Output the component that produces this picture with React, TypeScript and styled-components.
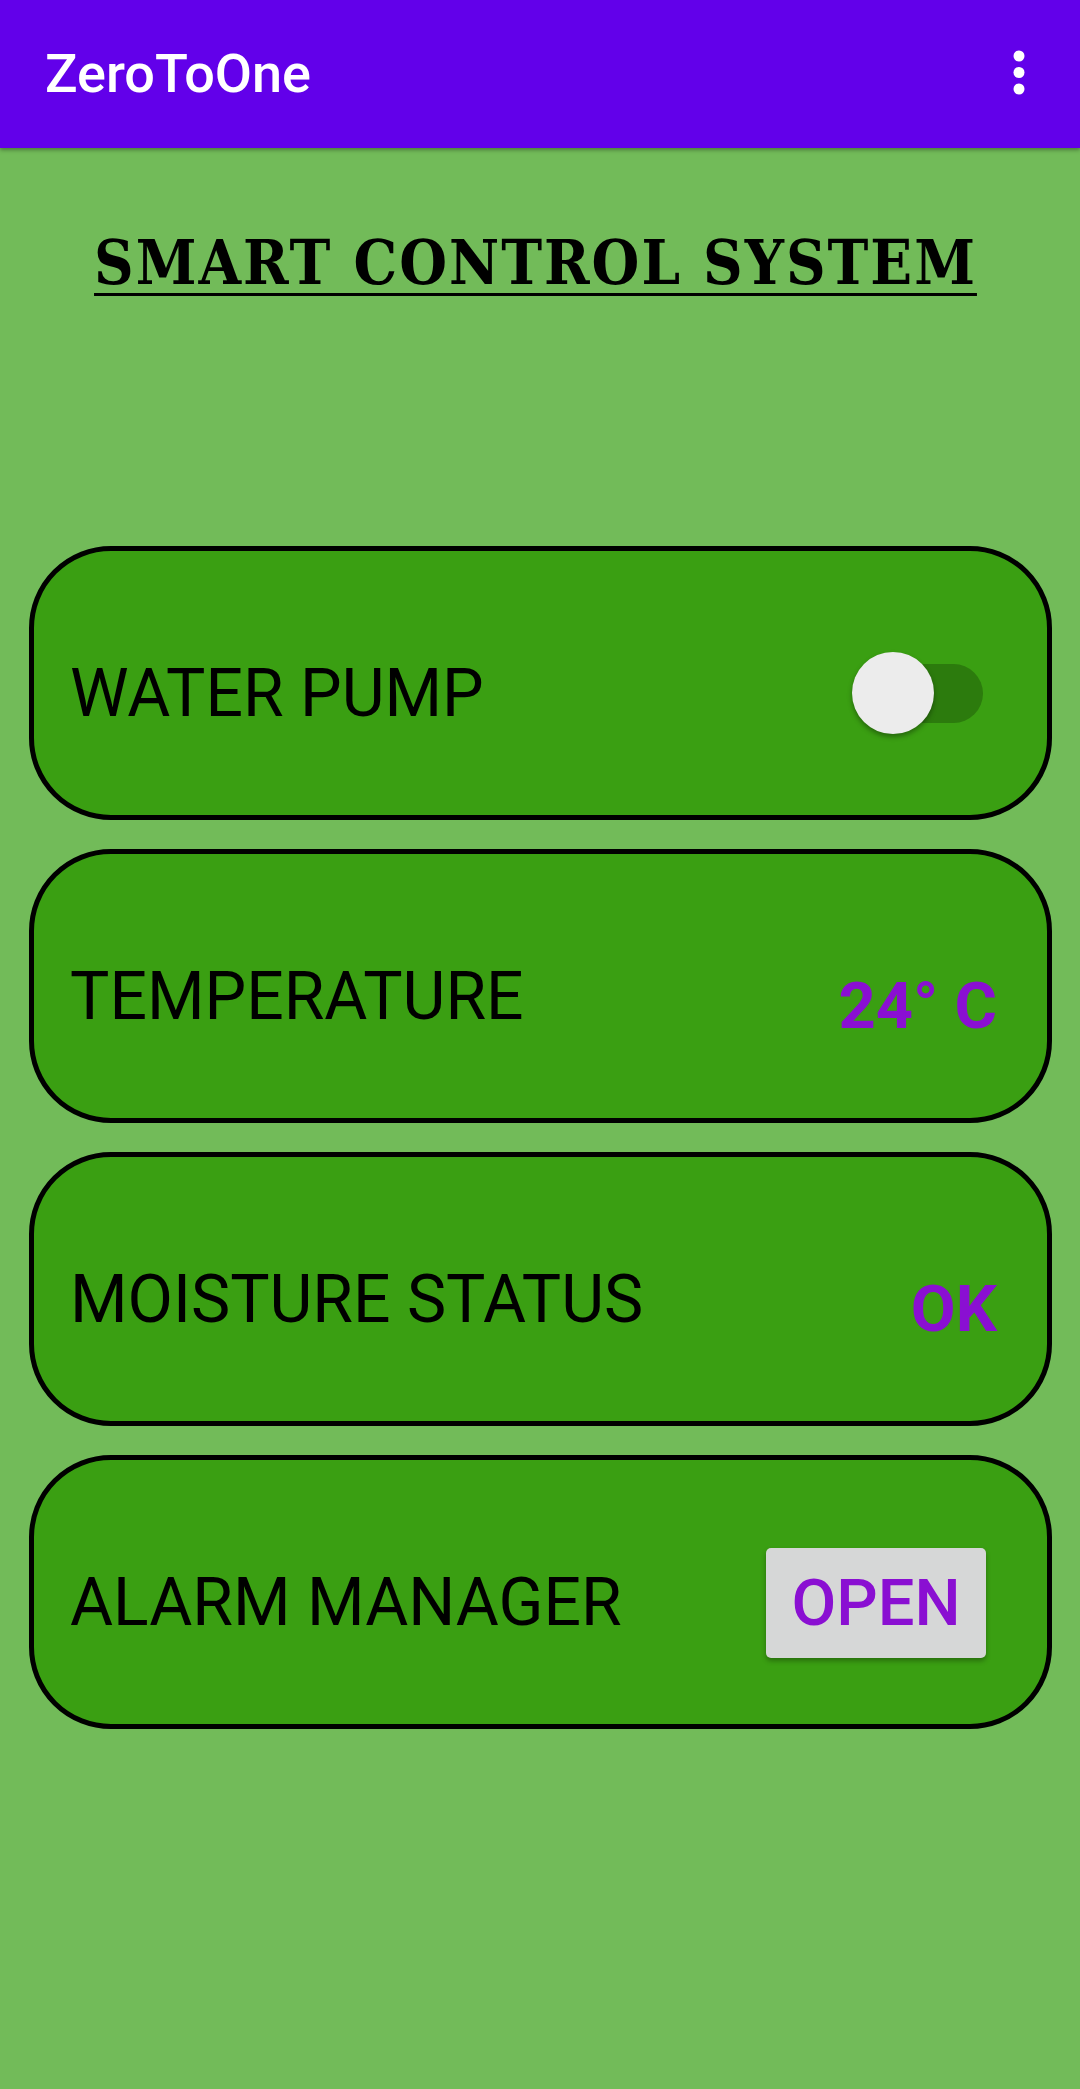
import { FC } from "react";
import styled, { createGlobalStyle } from "styled-components";

const purple = "#8a0fd2"

const GlobalStyle = createGlobalStyle`
    html, body {
        margin: 0;
        padding: 0;
        background-color: #72bb59;
    }
    body {
        font-family: Roboto, "Noto Sans", "Liberation Sans", sans-serif;
    }
`

const App: FC = () => {
    return <Screen>
        <GlobalStyle />
        <AppBar>
            <AppTitle>ZeroToOne</AppTitle>
            <MenuDots width="12" height="46" viewBox="0 0 12 46">
                <circle cx="6" cy="6" r="5.5" fill="#fff" />
                <circle cx="6" cy="22.5" r="5.5" fill="#fff" />
                <circle cx="6" cy="39" r="5.5" fill="#fff" />
            </MenuDots>
        </AppBar>
        <Heading>SMART CONTROL SYSTEM</Heading>
        <CardList>
            <Card>
                <Label>WATER PUMP</Label>
                <Switch>
                    <Track />
                    <Thumb />
                </Switch>
            </Card>
            <Card>
                <Label>TEMPERATURE</Label>
                <Value>24° C</Value>
            </Card>
            <Card>
                <Label>MOISTURE STATUS</Label>
                <Value>OK</Value>
            </Card>
            <Card>
                <Label>ALARM MANAGER</Label>
                <OpenButton>OPEN</OpenButton>
            </Card>
        </CardList>
    </Screen>
}

export default App

const Screen = styled.div`
    width: 1080px;
    min-height: 2089px;
    background-color: #72bb59;
    display: flex;
    flex-direction: column;
`

const AppBar = styled.header`
    height: 148px;
    background-color: #6200ea;
    display: flex;
    align-items: center;
    justify-content: space-between;
    padding: 0 55px 0 45px;
    box-sizing: border-box;
    box-shadow: 0 2px 4px rgba(0, 0, 0, 0.35);
    position: relative;
    z-index: 1;
`

const AppTitle = styled.div`
    color: #ffffff;
    font-family: Roboto, sans-serif;
    font-weight: 500;
    font-size: 54px;
    line-height: 1;
`

const MenuDots = styled.svg`
    display: block;
    margin-top: -2px;
`

const Heading = styled.h1`
    margin: 84px 0 0 0;
    text-align: center;
    padding-right: 9px;
    font-family: "DejaVu Serif Condensed", "DejaVu Serif", serif;
    font-stretch: condensed;
    font-weight: bold;
    font-size: 61px;
    letter-spacing: 2px;
    line-height: 1;
    color: #000;
    text-decoration: underline;
    text-decoration-thickness: 3px;
    text-underline-offset: 9px;
`

const CardList = styled.div`
    margin-top: 253px;
    padding: 0 28px 0 29px;
    display: flex;
    flex-direction: column;
    gap: 29px;
`

const Card = styled.div`
    height: 274px;
    box-sizing: border-box;
    border: 5px solid #000;
    border-radius: 82px;
    background-color: #3a9f12;
    display: flex;
    align-items: center;
    justify-content: space-between;
    padding: 22px 50px 0 36px;
`

const Label = styled.div`
    font-family: Roboto, sans-serif;
    font-size: 66px;
    line-height: 1;
    color: #000;
`

const Value = styled.div`
    font-family: Roboto, sans-serif;
    font-weight: bold;
    font-size: 65px;
    line-height: 1;
    color: ${purple};
    margin-top: 18px;
`

const Switch = styled.div`
    position: relative;
    width: 131px;
    height: 82px;
    margin-right: 14px;
    margin-top: -3px;
`

const Track = styled.div`
    position: absolute;
    left: 6px;
    right: 0;
    top: 12px;
    height: 59px;
    border-radius: 30px;
    background-color: #2c7b0d;
`

const Thumb = styled.div`
    position: absolute;
    left: 0;
    top: 0;
    width: 82px;
    height: 82px;
    border-radius: 50%;
    background-color: #ececec;
    box-shadow: 0 3px 5px rgba(0, 0, 0, 0.35);
`

const OpenButton = styled.button`
    width: 220px;
    height: 110px;
    margin-right: 11px;
    border: none;
    border-radius: 5px;
    background-color: #d6d7d7;
    box-shadow: 0 3px 5px rgba(0, 0, 0, 0.3);
    font-family: Roboto, sans-serif;
    font-weight: 500;
    font-size: 65px;
    line-height: 1;
    color: ${purple};
    padding: 0;
    display: flex;
    align-items: center;
    justify-content: center;
`
